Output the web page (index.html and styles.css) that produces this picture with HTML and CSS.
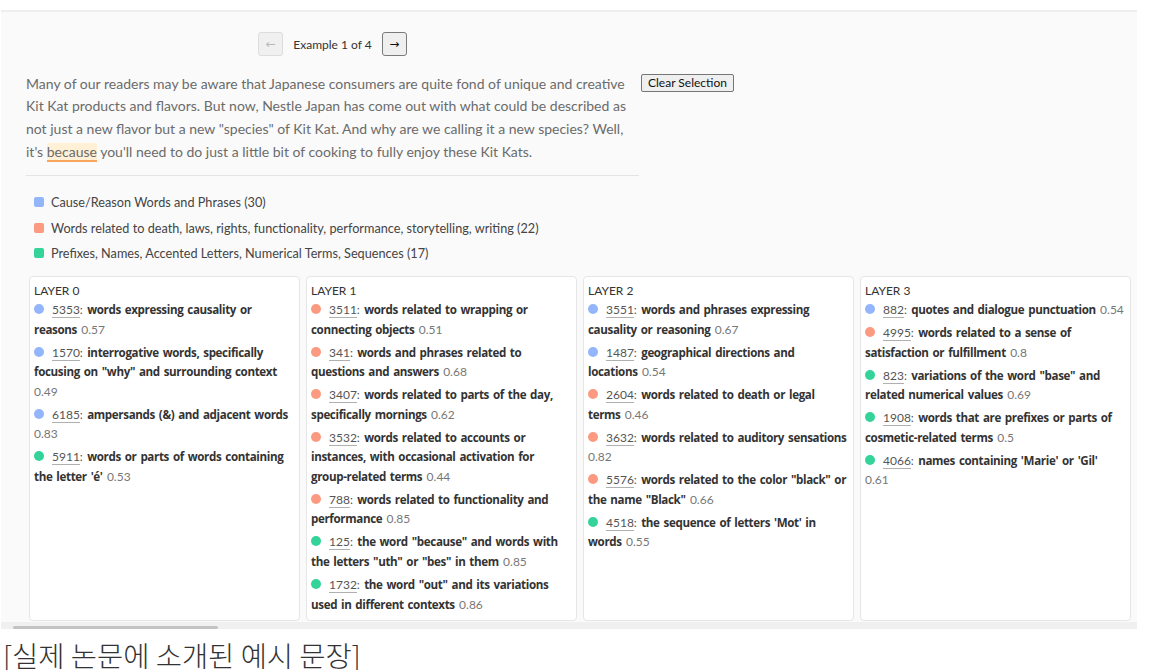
FILE: index.html
```html
<!DOCTYPE html>
<html lang="en">
<head>
<meta charset="utf-8">
<title>Example viewer</title>
<link rel="stylesheet" href="styles.css">
</head>
<body>
<div class="panel">
  <div class="top">
    <div class="main">
      <div class="nav">
        <button class="navbtn" disabled>&larr;</button>
        <span class="navlabel">Example 1 of 4</span>
        <button class="navbtn on">&rarr;</button>
      </div>
      <p class="passage">Many of our readers may be aware that Japanese consumers are quite fond of unique and creative Kit Kat products and flavors. But now, Nestle Japan has come out with what could be described as not just a new flavor but a new "species" of Kit Kat. And why are we calling it a new species? Well, it's <span class="hl">because</span> you'll need to do just a little bit of cooking to fully enjoy these Kit Kats.</p>
    </div>
    <button class="clear">Clear Selection</button>
  </div>

  <ul class="legend">
    <li><span class="sq blue"></span>Cause/Reason Words and Phrases (30)</li>
    <li><span class="sq red"></span>Words related to death, laws, rights, functionality, performance, storytelling, writing (22)</li>
    <li><span class="sq green"></span>Prefixes, Names, Accented Letters, Numerical Terms, Sequences (17)</li>
  </ul>

  <div class="layers">
    <div class="card">
      <div class="label">Layer 0</div>
      <div class="item"><span class="dot blue"></span><span class="num">5353</span><span class="colon">:</span> <b>words expressing causality or reasons</b> <span class="score">0.57</span></div>
      <div class="item"><span class="dot blue"></span><span class="num">1570</span><span class="colon">:</span> <b>interrogative words, specifically focusing on "why" and surrounding context</b> <span class="score">0.49</span></div>
      <div class="item"><span class="dot blue"></span><span class="num">6185</span><span class="colon">:</span> <b>ampersands (&amp;) and adjacent words</b> <span class="score">0.83</span></div>
      <div class="item"><span class="dot green"></span><span class="num">5911</span><span class="colon">:</span> <b>words or parts of words containing the letter 'é'</b> <span class="score">0.53</span></div>
    </div>
    <div class="card">
      <div class="label">Layer 1</div>
      <div class="item"><span class="dot red"></span><span class="num">3511</span><span class="colon">:</span> <b>words related to wrapping or connecting objects</b> <span class="score">0.51</span></div>
      <div class="item"><span class="dot red"></span><span class="num">341</span><span class="colon">:</span> <b>words and phrases related to questions and answers</b> <span class="score">0.68</span></div>
      <div class="item"><span class="dot red"></span><span class="num">3407</span><span class="colon">:</span> <b>words related to parts of the day, specifically mornings</b> <span class="score">0.62</span></div>
      <div class="item"><span class="dot red"></span><span class="num">3532</span><span class="colon">:</span> <b>words related to accounts or instances, with occasional activation for group-related terms</b> <span class="score">0.44</span></div>
      <div class="item"><span class="dot red"></span><span class="num">788</span><span class="colon">:</span> <b>words related to functionality and performance</b> <span class="score">0.85</span></div>
      <div class="item"><span class="dot green"></span><span class="num">125</span><span class="colon">:</span> <b>the word "because" and words with the letters "uth" or "bes" in them</b> <span class="score">0.85</span></div>
      <div class="item"><span class="dot green"></span><span class="num">1732</span><span class="colon">:</span> <b>the word "out" and its variations used in different contexts</b> <span class="score">0.86</span></div>
    </div>
    <div class="card">
      <div class="label">Layer 2</div>
      <div class="item"><span class="dot blue"></span><span class="num">3551</span><span class="colon">:</span> <b>words and phrases expressing causality or reasoning</b> <span class="score">0.67</span></div>
      <div class="item"><span class="dot blue"></span><span class="num">1487</span><span class="colon">:</span> <b>geographical directions and locations</b> <span class="score">0.54</span></div>
      <div class="item"><span class="dot red"></span><span class="num">2604</span><span class="colon">:</span> <b>words related to death or legal terms</b> <span class="score">0.46</span></div>
      <div class="item"><span class="dot red"></span><span class="num">3632</span><span class="colon">:</span> <b>words related to auditory sensations</b> <span class="score">0.82</span></div>
      <div class="item"><span class="dot red"></span><span class="num">5576</span><span class="colon">:</span> <b>words related to the color "black" or the name "Black"</b> <span class="score">0.66</span></div>
      <div class="item"><span class="dot green"></span><span class="num">4518</span><span class="colon">:</span> <b>the sequence of letters 'Mot' in words</b> <span class="score">0.55</span></div>
    </div>
    <div class="card">
      <div class="label">Layer 3</div>
      <div class="item"><span class="dot blue"></span><span class="num">882</span><span class="colon">:</span> <b>quotes and dialogue punctuation</b> <span class="score">0.54</span></div>
      <div class="item"><span class="dot red"></span><span class="num">4995</span><span class="colon">:</span> <b>words related to a sense of satisfaction or fulfillment</b> <span class="score">0.8</span></div>
      <div class="item"><span class="dot green"></span><span class="num">823</span><span class="colon">:</span> <b>variations of the word "base" and related numerical values</b> <span class="score">0.69</span></div>
      <div class="item"><span class="dot green"></span><span class="num">1908</span><span class="colon">:</span> <b>words that are prefixes or parts of cosmetic-related terms</b> <span class="score">0.5</span></div>
      <div class="item"><span class="dot green"></span><span class="num">4066</span><span class="colon">:</span> <b>names containing 'Marie' or 'Gil'</b> <span class="score">0.61</span></div>
    </div>
    <div class="card"></div>
  </div>

  <div class="scrollbar"><div class="thumb"></div></div>
</div>
<div class="caption">[실제 논문에 소개된 예시 문장]</div>
</body>
</html>
```

FILE: styles.css
```css
* { box-sizing: border-box; }

html, body {
  margin: 0;
  padding: 0;
  background: #ffffff;
}

body {
  font-family: "Lato", "Noto Sans", sans-serif;
  color: #333333;
}

.panel {
  margin: 10px 0 0 1px;
  width: 1136px;
  background: #fafafa;
  border-top: 2px solid #eeeeee;
  overflow: hidden;
}

.top {
  display: flex;
  align-items: flex-start;
  padding-left: 25px;
}

.main {
  width: 613px;
  border-bottom: 1px solid #e4e4e4;
}

.nav {
  display: flex;
  justify-content: center;
  align-items: center;
  gap: 10px;
  padding-top: 20px;
}

.navbtn {
  width: 25px;
  height: 24px;
  padding: 0;
  font-family: "DejaVu Sans", sans-serif;
  font-size: 12px;
  line-height: 22px;
  border-radius: 3px;
  background: #efefef;
  border: 1px solid #7a7a7a;
  color: #111;
}

.navbtn:disabled {
  border-color: #dcdcdc;
  background: #f0f0f0;
  color: #b8b8b8;
}

.navlabel {
  font-size: 12px;
  color: #333;
}

.passage {
  margin: 16.5px 0 0;
  padding-bottom: 11.5px;
  font-size: 14px;
  line-height: 22.75px;
  color: #6b6b6b;
}

.hl {
  background: #fff0d6;
  border-bottom: 2px solid #f7a45c;
}

.clear {
  margin: 62px 0 0 2px;
  height: 18px;
  padding: 0 6px;
  font-family: "Lato", sans-serif;
  font-size: 12px;
  line-height: 16px;
  color: #111;
  background: #efefef;
  border: 1px solid #767676;
  border-radius: 2px;
}

.legend {
  list-style: none;
  margin: 17px 0 0;
  padding: 0 0 0 33px;
  display: flex;
  flex-direction: column;
  gap: 7.5px;
}

.legend li {
  display: flex;
  align-items: center;
  font-size: 12.7px;
  line-height: 18px;
  color: #444;
}

.sq {
  width: 10px;
  height: 10px;
  border-radius: 2px;
  margin-right: 7px;
  flex: 0 0 auto;
}

.blue { background: #93b5fb; }
.red { background: #fb9a80; }
.green { background: #34d39a; }

.layers {
  display: flex;
  gap: 6px;
  margin-top: 14px;
  padding-left: 28px;
}

.card {
  flex: 0 0 271px;
  background: #ffffff;
  border: 1px solid #e6e6e6;
  border-radius: 4px;
  padding: 3.5px 5.8px 2px 4px;
}

.label {
  font-size: 12px;
  line-height: 19.5px;
  text-transform: uppercase;
  color: #333;
}

.item {
  font-size: 12px;
  line-height: 19.5px;
  word-spacing: 1.25px;
  margin-bottom: 3.6px;
  color: #333;
}

.item b {
  font-family: "Open Sans", "Lato", sans-serif;
  font-weight: 700;
  font-size: 11.6px;
  letter-spacing: -0.36px;
  color: #333;
}

.dot {
  display: inline-block;
  width: 10px;
  height: 10px;
  border-radius: 50%;
  margin-right: 8px;
  vertical-align: 0;
}

.num {
  color: #555;
  border-bottom: 1px solid #b0b0b0;
}

.colon {
  color: #555;
}

.score {
  color: #777;
}

.scrollbar {
  height: 7px;
  margin-top: 1px;
  background: #f0f0f0;
  display: flex;
  align-items: flex-end;
  padding-left: 12px;
}

.thumb {
  width: 205px;
  height: 3px;
  border-radius: 2px;
  background: #c3c3c3;
}

.caption {
  margin: 11px 0 0 3px;
  font-family: "Noto Sans CJK KR", sans-serif;
  font-weight: 300;
  font-size: 28.5px;
  line-height: 30px;
  color: #333;
}
```
